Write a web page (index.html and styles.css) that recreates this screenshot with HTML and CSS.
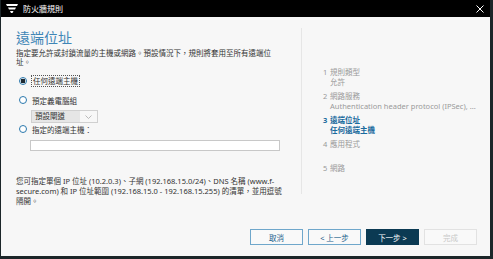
FILE: index.html
```html
<!DOCTYPE html>
<html lang="zh-Hant">
<head>
    <meta charset="UTF-8">
    <title>防火牆規則</title>
    <link rel="stylesheet" href="styles.css">
</head>
<body>
    <div class="window">
        <div class="titlebar">
            <svg class="logo" width="12" height="9" viewBox="0 0 12 9">
                <path d="M0 0 H12 L11 2 H1 Z" fill="#fff"/>
                <path d="M2 3.5 H10 L9 5.5 H3 Z" fill="#fff"/>
                <path d="M4 7 H7.5 L6.5 9 H5 Z" fill="#fff"/>
            </svg>
            <span class="title">防火牆規則</span>
            <svg class="close" width="8" height="8" viewBox="0 0 8 8">
                <path d="M0.5 0.5 L7.5 7.5 M7.5 0.5 L0.5 7.5" stroke="#fff" stroke-width="1"/>
            </svg>
        </div>
        <div class="content">
            <div class="main">
                <h1>遠端位址</h1>
                <p class="desc">指定要允許或封鎖流量的主機或網路。預設情況下，規則將套用至所有遠端位址。</p>

                <label class="option">
                    <input type="radio" name="remote" checked>
                    <span class="focus">任何遠端主機</span>
                </label>
                <label class="option">
                    <input type="radio" name="remote">
                    <span>預定義電腦組</span>
                </label>
                <div class="select">
                    <span class="select-value">預設閘道</span>
                    <span class="select-arrow">
                        <svg width="7" height="4" viewBox="0 0 7 4">
                            <path d="M0.5 0.5 L3.5 3.5 L6.5 0.5" fill="none" stroke="#aaa" stroke-width="0.8"/>
                        </svg>
                    </span>
                </div>
                <label class="option">
                    <input type="radio" name="remote">
                    <span>指定的遠端主機：</span>
                </label>
                <input class="hosts" type="text">

                <p class="hint">您可指定單個 IP 位址 (10.2.0.3)、子網 (192.168.15.0/24)、DNS 名稱 (www.f-secure.com) 和 IP 位址範圍 (192.168.15.0 - 192.168.15.255) 的清單，並用逗號隔開。</p>
            </div>
            <div class="divider"></div>
            <ol class="steps">
                <li><span class="num">1</span><div>規則類型<br>允許</div></li>
                <li><span class="num">2</span><div>網路服務<br>Authentication header protocol (IPSec), ...</div></li>
                <li class="active"><span class="num">3</span><div>遠端位址<br>任何遠端主機</div></li>
                <li><span class="num">4</span><div>應用程式</div></li>
                <li><span class="num">5</span><div>網路</div></li>
            </ol>
        </div>
        <div class="footer">
            <button class="btn">取消</button>
            <button class="btn">&lt; 上一步</button>
            <button class="btn primary">下一步 &gt;</button>
            <button class="btn disabled">完成</button>
        </div>
    </div>
</body>
</html>
```

FILE: styles.css
```css
html, body {
    margin: 0;
    padding: 0;
    width: 493px;
    height: 259px;
    overflow: hidden;
}
body {
    font-family: "Noto Sans", "Noto Sans CJK TC", sans-serif;
    background-color: #1c2629;
}
.window {
    box-sizing: border-box;
    width: 493px;
    height: 259px;
    display: flex;
    flex-direction: column;
    background-color: #f7f7f7;
    border-left: 1px solid #1c2629;
    border-right: 3px solid #1c2629;
    border-bottom: 3px solid #1c2629;
}
.titlebar {
    height: 17px;
    flex: none;
    display: flex;
    align-items: center;
    background-color: #000;
    padding: 0 4px 0 5px;
}
.logo {
    margin-right: 5px;
}
.title {
    color: #fff;
    font-size: 8px;
    flex: 1;
}
.close {
    margin-right: 2px;
}
.content {
    flex: 1;
    display: flex;
    min-height: 0;
}
.main {
    width: 270px;
    padding: 12px 0 0 15px;
    display: flex;
    flex-direction: column;
    align-items: flex-start;
}
h1 {
    margin: 0;
    font-size: 14px;
    line-height: 17px;
    font-weight: normal;
    color: #3f86b6;
}
.desc {
    margin: 3px 0 0;
    width: 262px;
    font-size: 7.5px;
    line-height: 9px;
    color: #333;
}
.option {
    display: flex;
    align-items: center;
    height: 12px;
    font-size: 7.5px;
    color: #333;
    margin-left: 3px;
}
.option:first-of-type {
    margin-top: 8px;
}
.option + .option {
    margin-top: 7px;
}
.option input {
    appearance: none;
    -webkit-appearance: none;
    box-sizing: border-box;
    width: 8px;
    height: 8px;
    margin: 0 5px 0 0;
    border: 1px solid #2b78ad;
    border-radius: 50%;
    background: #fff;
}
.option input:checked {
    background: radial-gradient(circle, #1e2a33 0 2.2px, #fff 2.6px);
}
.focus {
    outline: 1px dotted #555;
    outline-offset: 0;
    padding: 0 1px;
    line-height: 10px;
}
.select {
    box-sizing: border-box;
    margin: 4px 0 0 15px;
    width: 67px;
    height: 13px;
    border: 1px solid #d0d0d0;
    display: flex;
    background: #f7f7f7;
}
.select-value {
    flex: none;
    width: 48px;
    background: #e6e6e6;
    font-size: 7.5px;
    line-height: 11px;
    padding-left: 3px;
    box-sizing: border-box;
    color: #333;
}
.select-arrow {
    flex: 1;
    display: flex;
    align-items: center;
    justify-content: center;
}
.hosts {
    box-sizing: border-box;
    margin: 5px 0 0 14px;
    width: 250px;
    height: 11px;
    border: 1px solid #c8c8c8;
    background: #fff;
    padding: 0;
}
.hint {
    margin: 25px 0 0;
    width: 267px;
    font-size: 7.5px;
    line-height: 10px;
    color: #333;
}
.divider {
    width: 1px;
    margin: 11px 0 24px 15px;
    background-color: #e6e6e6;
}
.steps {
    list-style: none;
    margin: 0;
    padding: 50px 0 0 21px;
    font-size: 7.5px;
    line-height: 10px;
    color: #9a9a9a;
}
.steps li {
    display: flex;
    min-height: 20px;
    margin-bottom: 4px;
    white-space: nowrap;
}
.num {
    width: 7px;
    flex: none;
}
.steps li.active {
    color: #1a6b9e;
    font-weight: bold;
}
.footer {
    flex: none;
    height: 38px;
    display: flex;
    justify-content: flex-end;
    align-items: flex-start;
    gap: 5px;
    padding: 11px 13px 0 0;
    box-sizing: border-box;
}
.btn {
    width: 53px;
    height: 16px;
    padding: 0;
    font-family: inherit;
    font-size: 7.5px;
    color: #1d5f8c;
    background: #f9f9f9;
    border: 1px solid #6fa7cb;
}
.btn.primary {
    background: #0b3a53;
    border-color: #0b3a53;
    color: #fff;
}
.btn.disabled {
    color: #c8c8c8;
    border-color: #e2e2e2;
}
```
